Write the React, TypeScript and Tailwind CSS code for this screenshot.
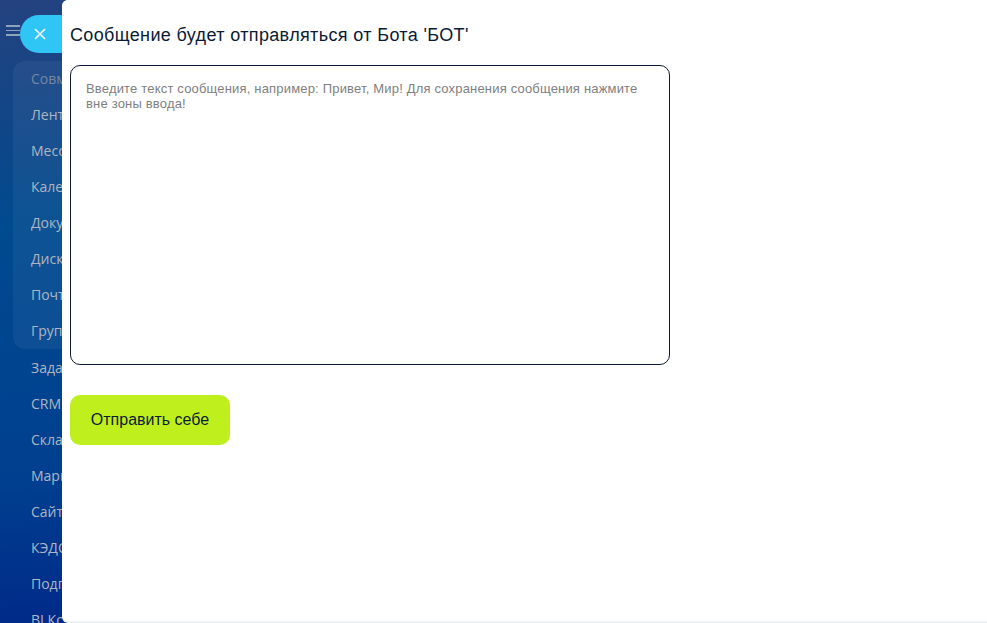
import * as React from "react";

const groupedItems = ["Совместная работа", "Лента", "Мессенджер", "Календарь", "Документы", "Диск", "Почта", "Группы"];
const otherItems = ["Задачи", "CRM", "Склад", "Маркетинг", "Сайты", "КЭДО", "Подпись", "BI Конструктор"];

function MenuItem({ label, muted }: { label: string; muted?: boolean }) {
  return (
    <div className={`h-9 shrink-0 whitespace-nowrap pl-[18px] text-[14px] leading-9 ${muted ? "text-[#7587a3]" : "text-[#aeb6c2]"}`}>
      {label}
    </div>
  );
}

export default function App() {
  return (
    <div className="relative flex h-[623px] w-[987px] overflow-hidden bg-[linear-gradient(175deg,#24427f_0%,#004a8f_32%,#003f8f_68%,#001e85_100%)] font-['Liberation_Sans',sans-serif]">
      <aside className="h-full w-[62px] shrink-0 overflow-hidden font-['Open_Sans',sans-serif]">
        <div className="flex h-[61px] items-start pl-[6px] pt-[25px]">
          <div className="flex w-[14px] flex-col gap-[3px]">
            <span className="h-[1.5px] bg-[#8fa3bd]" />
            <span className="h-[1.5px] bg-[#8fa3bd]" />
            <span className="h-[1.5px] bg-[#8fa3bd]" />
          </div>
        </div>
        <div className="ml-[13px] w-[200px] rounded-xl bg-[#ffffff0d]">
          {groupedItems.map((item, i) => (
            <MenuItem key={item} label={item} muted={i === 0} />
          ))}
        </div>
        <div className="ml-[13px] mt-[1px]">
          {otherItems.map((item) => (
            <MenuItem key={item} label={item} />
          ))}
        </div>
      </aside>

      <button
        type="button"
        className="absolute left-[20px] top-[15px] flex h-[38px] w-[42px] items-center rounded-l-[19px] bg-[#2fc6f6] pl-[14px]"
      >
        <svg width="12" height="12" viewBox="0 0 12 12" fill="none" stroke="#ffffff" strokeWidth="1.6">
          <path d="M1 1l10 10M11 1L1 11" />
        </svg>
      </button>

      <main className="flex h-full flex-1 flex-col overflow-hidden rounded-l-[6px] bg-[#eef2f4]">
        <div className="flex-1 rounded-bl-[6px] bg-white pl-2 pt-[25px]">
          <h1 className="text-[18px] leading-[21px] font-normal tracking-[0.36px] text-[#0b1b33]">Сообщение будет отправляться от Бота 'БОТ'</h1>
          <textarea
            readOnly
            placeholder="Введите текст сообщения, например: Привет, Мир! Для сохранения сообщения нажмите вне зоны ввода!"
            className="mt-[19px] block h-[300px] w-[600px] resize-none rounded-[10px] border border-[#0b1b33] px-[15px] py-[15px] text-[13px] leading-[15px] tracking-[0.18px] text-[#0b1b33] outline-none placeholder:text-[#808080]"
          />
          <button
            type="button"
            className="mt-[30px] block h-[50px] w-[160px] rounded-[10px] bg-[#bff01e] text-[16px] text-[#0b1b33]"
          >
            Отправить себе
          </button>
        </div>
        <div className="h-[2px] shrink-0" />
      </main>
    </div>
  );
}
